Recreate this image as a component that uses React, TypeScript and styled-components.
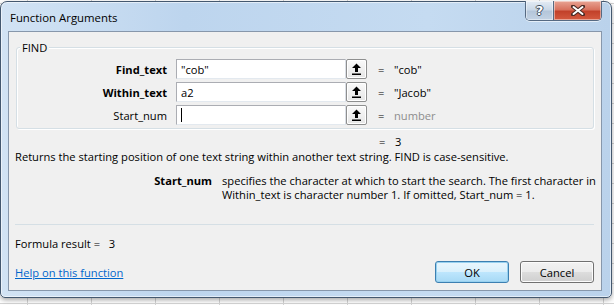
import styled, { createGlobalStyle } from "styled-components";

const GlobalStyle = createGlobalStyle`
  body {
    margin: 0;
    font-family: "Open Sans", "Noto Sans", sans-serif;
  }
  * {
    box-sizing: border-box;
  }
`;

const Page = styled.div`
  width: 614px;
  height: 305px;
  overflow: hidden;
  padding-top: 1px;
  background-color: #ffffff;
  background-image: linear-gradient(#d4d4d4 1px, transparent 1px),
    linear-gradient(90deg, #d4d4d4 1px, transparent 1px);
  background-size: 64px 20px;
  background-position: 27px 3px;
`;

const Window = styled.div`
  width: 612px;
  height: 297px;
  display: flex;
  flex-direction: column;
  padding: 0 9px 6px 7px;
  border: 1px solid #44586f;
  border-radius: 7px 7px 5px 5px;
  background: linear-gradient(90deg, #d2e3f4 0%, #bdd5ee 30%, #c5dbf1 70%, #bad2eb 100%);
  box-shadow: 0 2px 5px rgba(0, 0, 0, 0.35), inset 0 0 0 1px rgba(255, 255, 255, 0.55);
`;

const TitleBar = styled.div`
  height: 29px;
  display: flex;
  align-items: flex-start;
`;

const Title = styled.div`
  margin: 8px 0 0 2px;
  font-size: 11.4px;
  line-height: 15px;
  color: #000;
`;

const CaptionButtons = styled.div`
  margin-left: auto;
  margin-top: -1px;
  display: flex;
  height: 20px;
  border: 1px solid #566a82;
  border-top: none;
  border-radius: 0 0 5px 5px;
  overflow: hidden;
  box-shadow: 0 1px 0 rgba(255, 255, 255, 0.6);
`;

const CaptionButton = styled.div<{ $close?: boolean }>`
  width: ${(p) => (p.$close ? 48 : 27)}px;
  display: flex;
  align-items: center;
  justify-content: center;
  border-left: ${(p) => (p.$close ? "1px solid #566a82" : "none")};
  background: ${(p) =>
    p.$close
      ? "linear-gradient(#e8a494 0%, #d8725e 45%, #c2412a 55%, #d45a3f 100%)"
      : "linear-gradient(#e3ebf4 0%, #cad8e7 45%, #b4c6da 55%, #c3d3e4 100%)"};
  box-shadow: inset 0 0 0 1px rgba(255, 255, 255, 0.45);
`;

const HelpGlyph = styled.span`
  font-family: "DejaVu Sans", sans-serif;
  font-weight: bold;
  font-size: 13px;
  line-height: 1;
  color: #ffffff;
  text-shadow: -1px 0 #3d4d60, 1px 0 #3d4d60, 0 -1px #3d4d60, 0 1px #3d4d60;
`;

const Client = styled.div`
  flex: 1;
  display: flex;
  flex-direction: column;
  padding: 0 7px 0 6px;
  background: #f0f0f0;
  border: 1px solid #8797ab;
  font-size: 11.15px;
  color: #000;
`;

const GroupBox = styled.div`
  position: relative;
  margin: 15px 0 0 1px;
  padding: 11px 0 3px 0;
  border: 1px solid #d5dfe5;
  border-radius: 3px;
  box-shadow: inset 1px 1px 0 #ffffff, 1px 1px 0 #ffffff;
  display: flex;
  flex-direction: column;
  gap: 3px;
`;

const GroupLabel = styled.span`
  position: absolute;
  top: -8px;
  left: 3px;
  padding: 0 2px;
  line-height: 15px;
  background: #f0f0f0;
`;

const ArgRow = styled.div`
  display: flex;
  align-items: center;
  height: 20px;
`;

const ArgLabel = styled.div<{ $required?: boolean }>`
  width: 150px;
  margin-right: 9px;
  text-align: right;
  font-weight: ${(p) => (p.$required ? 700 : 400)};
`;

const ArgInput = styled.div`
  width: 170px;
  height: 20px;
  display: flex;
  align-items: center;
  padding-left: 4px;
  background: #ffffff;
  border: 1px solid #abadb3;
  border-right-color: #dbdfe6;
  border-bottom-color: #e3e9ef;
  white-space: nowrap;
`;

const Caret = styled.span`
  width: 1px;
  height: 14px;
  background: #000;
`;

const RefButton = styled.div`
  width: 21px;
  height: 20px;
  display: flex;
  align-items: center;
  justify-content: center;
  border: 1px solid #8e8f8f;
  border-radius: 2px;
  background: linear-gradient(#fafafa, #e6e6e6);
  box-shadow: inset 0 0 0 1px #ffffff;
`;

const Equals = styled.span`
  width: 16px;
  margin-left: 11px;
`;

const ArgValue = styled.span<{ $muted?: boolean }>`
  color: ${(p) => (p.$muted ? "#8d8d8d" : "#000")};
`;

const ResultLine = styled.div`
  display: flex;
  margin-top: 5px;
  padding-left: 353px;
  height: 15px;
  line-height: 15px;
`;

const Description = styled.div`
  height: 16px;
  line-height: 16px;
  white-space: nowrap;
`;

const ParamHelp = styled.div`
  display: grid;
  grid-template-columns: 197px 1fr;
  column-gap: 10px;
  margin-top: 9px;
  line-height: 14px;
  white-space: nowrap;
`;

const ParamName = styled.div`
  text-align: right;
  font-weight: 700;
`;

const Separator = styled.div`
  height: 1px;
  margin-top: 22px;
  background: #d5dfe5;
`;

const FormulaResult = styled.div`
  margin-top: 11px;
  line-height: 15px;
`;

const Footer = styled.div`
  display: flex;
  align-items: center;
  margin-top: 10px;
`;

const HelpLink = styled.a`
  color: #0066cc;
  text-decoration: underline;
  cursor: pointer;
`;

const DialogButton = styled.button<{ $default?: boolean }>`
  width: 74px;
  height: 22px;
  margin-left: ${(p) => (p.$default ? "auto" : "11px")};
  font-family: inherit;
  font-size: 11.15px;
  color: #000;
  border-radius: 3px;
  border: 1px solid ${(p) => (p.$default ? "#3c7fb1" : "#707070")};
  background: ${(p) =>
    p.$default
      ? "linear-gradient(#eaf6fd 0%, #d9f0fc 50%, #bee6fd 50%, #a7d9f5 100%)"
      : "linear-gradient(#f2f2f2 0%, #ebebeb 50%, #dddddd 50%, #cfcfcf 100%)"};
  box-shadow: inset 0 0 0 1px ${(p) => (p.$default ? "#98d1ef" : "#fcfcfc")};
  padding: 0;
`;

const UploadArrow = () => (
  <svg width="11" height="12" viewBox="0 0 11 12">
    <path d="M5.5 0.5 L10 5 H7 V9 H4 V5 H1 Z" fill="#000" />
    <rect x="1" y="10.5" width="9" height="1.5" fill="#000" />
  </svg>
);

const CloseGlyph = () => (
  <svg width="14" height="11" viewBox="0 0 14 11">
    <path d="M2 1.5 L12 9.5 M12 1.5 L2 9.5" stroke="#4a2a24" strokeWidth="4" strokeLinecap="round" />
    <path d="M2.5 2 L11.5 9 M11.5 2 L2.5 9" stroke="#ffffff" strokeWidth="2" strokeLinecap="round" />
  </svg>
);

type Arg = {
  name: string;
  required: boolean;
  input: string;
  value: string;
  muted?: boolean;
  focused?: boolean;
};

const args: Arg[] = [
  { name: "Find_text", required: true, input: "\"cob\"", value: "\"cob\"" },
  { name: "Within_text", required: true, input: "a2", value: "\"Jacob\"" },
  { name: "Start_num", required: false, input: "", value: "number", muted: true, focused: true },
];

const App = () => {
  return (
    <Page>
      <GlobalStyle />
      <Window>
        <TitleBar>
          <Title>Function Arguments</Title>
          <CaptionButtons>
            <CaptionButton>
              <HelpGlyph>?</HelpGlyph>
            </CaptionButton>
            <CaptionButton $close>
              <CloseGlyph />
            </CaptionButton>
          </CaptionButtons>
        </TitleBar>

        <Client>
          <GroupBox>
            <GroupLabel>FIND</GroupLabel>
            {args.map((arg) => (
              <ArgRow key={arg.name}>
                <ArgLabel $required={arg.required}>{arg.name}</ArgLabel>
                <ArgInput>{arg.focused ? <Caret /> : arg.input}</ArgInput>
                <RefButton>
                  <UploadArrow />
                </RefButton>
                <Equals>=</Equals>
                <ArgValue $muted={arg.muted}>{arg.value}</ArgValue>
              </ArgRow>
            ))}
          </GroupBox>

          <ResultLine>
            <Equals>=</Equals>
            <span>3</span>
          </ResultLine>

          <Description>
            Returns the starting position of one text string within another text string. FIND is
            case-sensitive.
          </Description>

          <ParamHelp>
            <ParamName>Start_num</ParamName>
            <div>
              specifies the character at which to start the search. The first character in
              <br />
              Within_text is character number 1. If omitted, Start_num = 1.
            </div>
          </ParamHelp>

          <Separator />

          <FormulaResult>Formula result = &nbsp;&nbsp;3</FormulaResult>

          <Footer>
            <HelpLink>Help on this function</HelpLink>
            <DialogButton $default>OK</DialogButton>
            <DialogButton>Cancel</DialogButton>
          </Footer>
        </Client>
      </Window>
    </Page>
  );
};

export default App;
